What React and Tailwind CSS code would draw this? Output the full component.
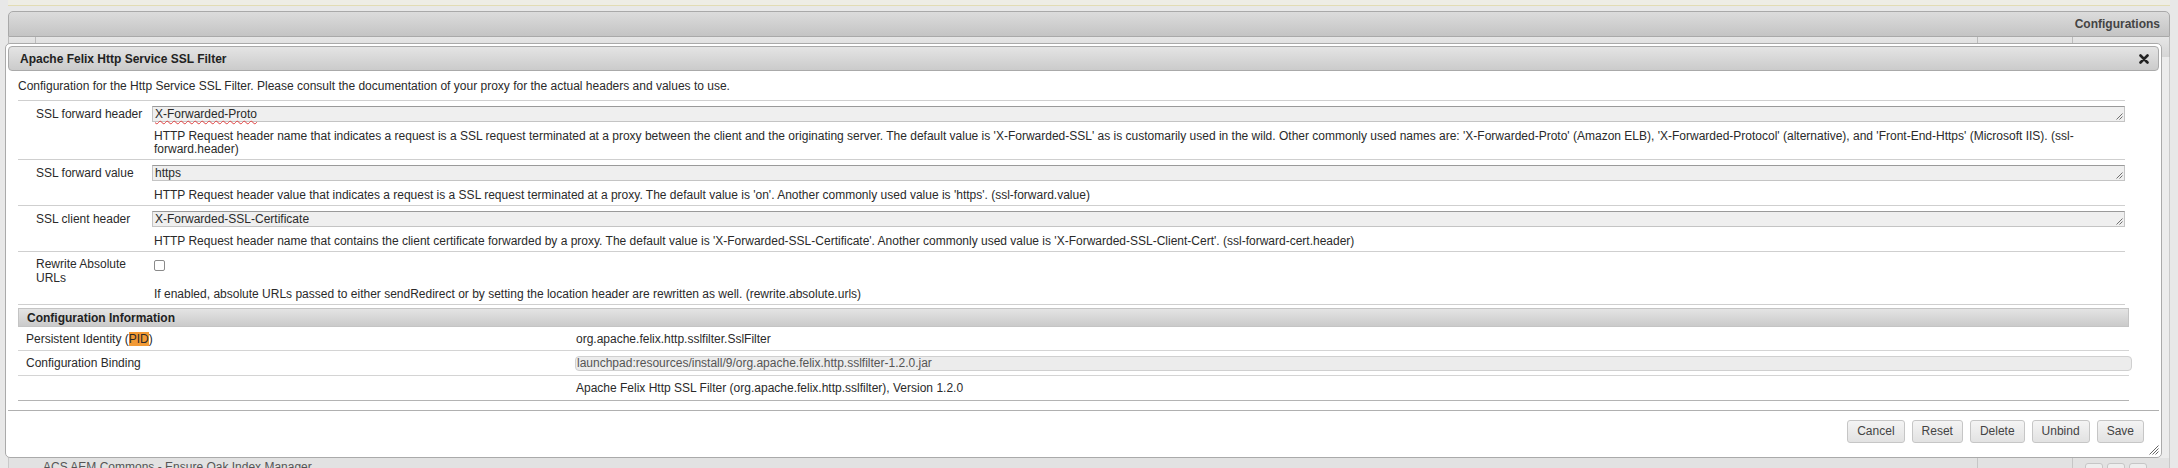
import React from 'react';

function TextGrip() {
  return (
    <svg width="8" height="8" viewBox="0 0 8 8" className="absolute right-[1px] bottom-[1px]">
      <path d="M7.5 1.5 L1.5 7.5 M7.5 4.5 L4.5 7.5" stroke="#707070" strokeWidth="1" fill="none" />
    </svg>
  );
}

function FieldRow({ label, value, help, spell }) {
  return (
    <div className="flex border-b border-[#cfcfcf]">
      <div className="w-[133px] shrink-0 pl-[18px] pt-[6px] leading-[14px]">{label}</div>
      <div className="flex-1 pt-[5px] pb-[3px]">
        <div className="relative ml-[1px] h-[16px] border border-[#c4c4c4] border-t-[#9a9a9a] bg-[#efefef] pl-[2px] leading-[14px]">
          <span className={spell ? 'underline decoration-wavy decoration-[#e04040] decoration-1 underline-offset-2' : ''}>{value}</span>
          <TextGrip />
        </div>
        <div className="mt-[8px] pl-[3px] leading-[13px]">{help}</div>
      </div>
    </div>
  );
}

function Button({ children }) {
  return (
    <button className="h-[23px] px-[9px] rounded-[3px] border border-[#c6c6c6] bg-gradient-to-b from-[#f4f4f4] to-[#e2e2e2] text-[12px] text-[#444] leading-[21px]">
      {children}
    </button>
  );
}

export default function App() {
  return (
    <div className="relative h-[468px] w-full overflow-hidden bg-[#e8e8e8] font-['Liberation_Sans',Arial,sans-serif] text-[12px] text-[#2a2a2a]">
      {/* page behind the dialog */}
      <div className="mx-[8px] h-[6px] bg-[#eeede5] border-b border-[#e2dcb4]" />
      <div className="mx-[8px] mt-[5px] flex h-[26px] items-center justify-end rounded-t-[5px] border border-[#a9a9a9] bg-gradient-to-b from-[#dcdcdc] to-[#c4c4c4] pr-[9px]">
        <span className="text-[12px] font-bold text-[#444]">Configurations</span>
      </div>
      <div className="mx-[8px] flex h-[20px] border-x border-[#bdbdbd] bg-gradient-to-b from-[#e6e6e6] to-[#d6d6d6]">
        <div className="w-[27px] border-r border-[#bcbcbc]" />
        <div className="w-[1942px] border-r border-[#bcbcbc]" />
        <div className="w-[95px] border-r border-[#bcbcbc]" />
        <div className="flex-1" />
      </div>
      <div className="mx-[8px] h-[401px] border-x border-[#c9c9c9] bg-[#ececec]" />
      <div className="mx-[8px] flex h-[30px] border-x border-[#c9c9c9] bg-[#e2e2e2]">
        <div className="w-[27px]" />
        <div className="w-[1942px] border-r border-[#c6c6c6] pl-[7px] pt-[2px] leading-[14px] text-[#555]">ACS AEM Commons - Ensure Oak Index Manager</div>
        <div className="w-[95px] border-r border-[#c6c6c6]" />
        <div className="flex flex-1 gap-[4px] pl-[12px] pt-[5px]">
          <div className="h-[20px] w-[18px] rounded-[3px] border border-[#c6c6c6] bg-[#eeeeee]" />
          <div className="h-[20px] w-[18px] rounded-[3px] border border-[#c6c6c6] bg-[#eeeeee]" />
          <div className="h-[20px] w-[18px] rounded-[3px] border border-[#c6c6c6] bg-[#eeeeee]" />
        </div>
      </div>

      {/* dialog */}
      <div className="absolute left-[5px] top-[43px] flex h-[415px] w-[2157px] flex-col rounded-[5px] border border-[#aaaaaa] bg-white p-[2px]">
        <div className="flex h-[25px] shrink-0 items-center justify-between rounded-[4px] border border-[#aaaaaa] bg-gradient-to-b from-[#e4e4e4] to-[#cbcbcb] pl-[11px] pr-[9px]">
          <span className="font-bold text-[#222]">Apache Felix Http Service SSL Filter</span>
          <svg width="10" height="10" viewBox="0 0 10 10">
            <path d="M1.5 1.5 L8.5 8.5 M8.5 1.5 L1.5 8.5" stroke="#222" strokeWidth="2.6" strokeLinecap="round" />
          </svg>
        </div>

        <div className="pl-[10px] pr-[30px]">
          <div className="mr-[4px]">
            <p className="border-b border-[#cfcfcf] pt-[8px] pb-[7px] leading-[14px]">
              Configuration for the Http Service SSL Filter. Please consult the documentation of your proxy for the actual headers and values to use.
            </p>
            <FieldRow
              label="SSL forward header"
              value="X-Forwarded-Proto"
              spell
              help="HTTP Request header name that indicates a request is a SSL request terminated at a proxy between the client and the originating server. The default value is 'X-Forwarded-SSL' as is customarily used in the wild. Other commonly used names are: 'X-Forwarded-Proto' (Amazon ELB), 'X-Forwarded-Protocol' (alternative), and 'Front-End-Https' (Microsoft IIS). (ssl-forward.header)"
            />
            <FieldRow
              label="SSL forward value"
              value="https"
              help="HTTP Request header value that indicates a request is a SSL request terminated at a proxy. The default value is 'on'. Another commonly used value is 'https'. (ssl-forward.value)"
            />
            <FieldRow
              label="SSL client header"
              value="X-Forwarded-SSL-Certificate"
              help="HTTP Request header name that contains the client certificate forwarded by a proxy. The default value is 'X-Forwarded-SSL-Certificate'. Another commonly used value is 'X-Forwarded-SSL-Client-Cert'. (ssl-forward-cert.header)"
            />
            <div className="flex border-b border-[#cfcfcf]">
              <div className="w-[133px] shrink-0 pl-[18px] pt-[5px] leading-[14px]">Rewrite Absolute URLs</div>
              <div className="flex-1 pt-[8px] pb-[3px]">
                <div className="ml-[3px] h-[11px] w-[11px] rounded-[2px] border border-[#8a8a8a] bg-white" />
                <div className="mt-[17px] pl-[3px] leading-[13px]">
                  If enabled, absolute URLs passed to either sendRedirect or by setting the location header are rewritten as well. (rewrite.absolute.urls)
                </div>
              </div>
            </div>
          </div>

          {/* configuration information */}
          <div className="mt-[3px]">
            <div className="flex h-[19px] items-center border border-[#c4c4c4] bg-gradient-to-b from-[#e4e4e4] to-[#cacaca] pl-[8px] font-bold text-[#222]">
              Configuration Information
            </div>
            <div className="flex h-[24px] items-center border-b border-[#d4d4d4]">
              <div className="w-[557px] shrink-0 pl-[8px]">
                Persistent Identity (<span className="bg-[#f29a35]">PID</span>)
              </div>
              <div className="pl-[1px]">org.apache.felix.http.sslfilter.SslFilter</div>
            </div>
            <div className="flex h-[25px] items-center border-b border-[#d4d4d4]">
              <div className="w-[557px] shrink-0 pl-[8px]">Configuration Binding</div>
              <div className="mr-[-3px] flex h-[15px] flex-1 items-center rounded-[4px] border border-[#d0d0d0] bg-[#ececec] pl-[1px] text-[#555]">
                launchpad:resources/install/9/org.apache.felix.http.sslfilter-1.2.0.jar
              </div>
            </div>
            <div className="flex h-[25px] items-center border-b border-[#b4b4b4]">
              <div className="w-[557px] shrink-0 pl-[8px]" />
              <div className="pl-[1px]">Apache Felix Http SSL Filter (org.apache.felix.http.sslfilter), Version 1.2.0</div>
            </div>
          </div>
        </div>

        {/* button pane */}
        <div className="relative mt-auto flex h-[45px] justify-end gap-[7px] border-t border-[#b0b0b0] pt-[9px] pr-[15px]">
          <Button>Cancel</Button>
          <Button>Reset</Button>
          <Button>Delete</Button>
          <Button>Unbind</Button>
          <Button>Save</Button>
          <svg width="11" height="11" viewBox="0 0 11 11" className="absolute right-[0px] bottom-[0px]">
            <path d="M10.5 1.5 L1.5 10.5 M10.5 4.5 L4.5 10.5 M10.5 7.5 L7.5 10.5" stroke="#666" strokeWidth="1" fill="none" />
          </svg>
        </div>
      </div>
    </div>
  );
}
